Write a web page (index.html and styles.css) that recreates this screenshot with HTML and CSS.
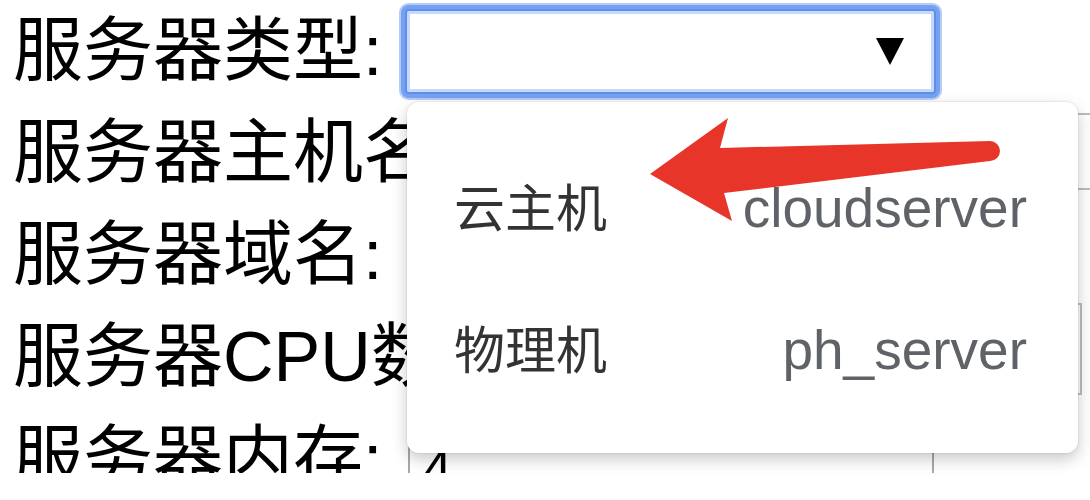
FILE: index.html
```html
<!DOCTYPE html>
<html lang="zh-CN">
<head>
<meta charset="utf-8">
<title>服务器表单</title>
<link rel="stylesheet" href="styles.css">
</head>
<body>
<div class="page">
  <div class="form">
    <div class="row">
      <span class="label">服务器类型:</span>
      <div class="select is-focused"><span class="caret"></span></div>
    </div>
    <div class="row">
      <span class="label">服务器主机名:</span>
      <div class="input input-host"></div>
    </div>
    <div class="row">
      <span class="label">服务器域名:</span>
      <div class="input input-domain"></div>
    </div>
    <div class="row">
      <span class="label">服务器CPU数:</span>
      <div class="input input-cpu"></div>
    </div>
    <div class="row">
      <span class="label">服务器内存:</span>
      <div class="input input-mem">4</div>
    </div>
  </div>

  <div class="menu">
    <div class="option"><span class="opt-name">云主机</span><span class="opt-value">cloudserver</span></div>
    <div class="option"><span class="opt-name">物理机</span><span class="opt-value">ph_server</span></div>
  </div>

  <svg class="arrow" width="1090" height="500" viewBox="0 0 1090 500" aria-hidden="true">
    <path d="M650,174 L728,118 L720,148 L990,141 A10,10 0 0 1 990,161 L724,193 L732,221 Z" fill="#e8352a"/>
  </svg>
</div>
</body>
</html>
```

FILE: styles.css
```css
html, body {
  margin: 0;
  padding: 0;
  background: #ffffff;
}

body {
  overflow: hidden;
}

.page {
  position: relative;
  width: 1090px;
  height: 500px;
  overflow: hidden;
}

.form {
  height: 473px;
  overflow: hidden;
  padding-left: 13px;
  display: flex;
  flex-direction: column;
}

.row {
  height: 102px;
  flex-shrink: 0;
  display: flex;
  align-items: center;
}

.label {
  font-family: "Liberation Sans", "Noto Sans CJK SC", sans-serif;
  font-size: 70px;
  line-height: 1;
  color: #000;
  white-space: nowrap;
  flex-shrink: 0;
}

.select {
  box-sizing: border-box;
  width: 531px;
  height: 85px;
  margin-left: 23px;
  flex-shrink: 0;
  background: #fff;
  border: 2px solid #5f8fe9;
  border-radius: 4px;
  box-shadow: inset 0 0 0 3px #c6d9fb, 0 0 0 4px #76a1f1, 0 0 0 6px #b4ccf7;
  display: flex;
  align-items: center;
  justify-content: flex-end;
  padding-right: 30px;
}

.caret {
  width: 0;
  height: 0;
  border-left: 14px solid transparent;
  border-right: 14px solid transparent;
  border-top: 27px solid #000;
}

.input {
  box-sizing: border-box;
  flex-shrink: 0;
  border: 2px solid #bdbdbd;
  background: #fff;
}

.input-host {
  width: 700px;
  height: 77px;
  margin-left: 10px;
  align-self: flex-start;
  margin-top: 11px;
}

.input-domain {
  width: 560px;
  height: 80px;
  margin-left: 40px;
}

.input-cpu {
  width: 612px;
  height: 92px;
  margin-left: 10px;
  align-self: flex-start;
  margin-top: -3px;
}

.input-mem {
  width: 526px;
  height: 92px;
  margin-left: 26px;
  align-self: flex-start;
  margin-top: 14px;
  border-color: #a8a8a8;
  display: flex;
  align-items: center;
  padding-left: 12px;
  font-family: "Liberation Sans", sans-serif;
  font-size: 53px;
  line-height: 1;
  color: #000;
}

.menu {
  position: absolute;
  left: 407px;
  top: 102px;
  width: 671px;
  height: 351px;
  box-sizing: border-box;
  padding: 33px 51px 34px 47px;
  background: #fff;
  border-radius: 12px;
  box-shadow: 0 0 0 1px rgba(0, 0, 0, 0.05), 0 6px 16px rgba(0, 0, 0, 0.22);
  display: flex;
  flex-direction: column;
}

.option {
  height: 142px;
  box-sizing: border-box;
  padding-top: 45px;
  display: flex;
  align-items: baseline;
  justify-content: space-between;
}

.opt-name {
  font-family: "Noto Sans CJK SC", sans-serif;
  font-size: 51px;
  line-height: 1;
  color: #333;
}

.opt-value {
  font-family: "Liberation Sans", sans-serif;
  font-size: 55px;
  line-height: 1;
  color: #5f6368;
}

.arrow {
  position: absolute;
  left: 0;
  top: 0;
  pointer-events: none;
}
```
